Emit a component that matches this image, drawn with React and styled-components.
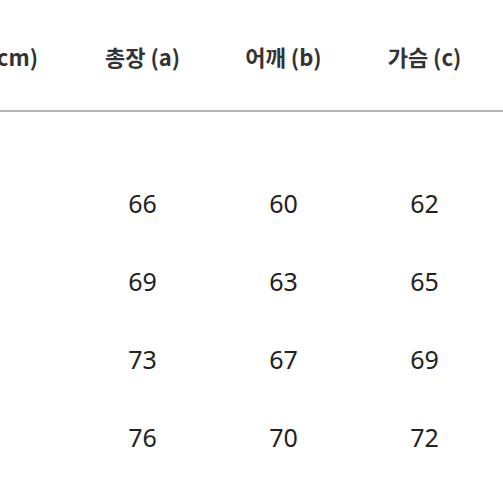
import React from "react";
import styled, { createGlobalStyle } from "styled-components";

const Global = createGlobalStyle`
  html, body { margin: 0; padding: 0; background: #fff; }
  body { width: 503px; height: 503px; overflow: hidden; font-family: "Noto Sans", "Noto Sans CJK KR", sans-serif; }
`;

const Table = styled.div`
  width: 503px;
`;

const Row = styled.div`
  display: grid;
  grid-template-columns: 72px repeat(3, 141px);
  height: ${(p) => p.$h}px;
  align-items: center;
`;

const HeadRow = styled(Row)`
  box-sizing: border-box;
  padding-top: 2px;
  border-bottom: 2px solid #b4b4b4;
`;

const Body = styled.div`
  padding-top: 52px;
`;

const HeadCell = styled.div`
  display: flex;
  justify-content: ${(p) => (p.$first ? "flex-end" : "center")};
  padding-right: ${(p) => (p.$first ? 34 : 0)}px;
  white-space: nowrap;
  font-family: "Noto Sans CJK KR", "Noto Sans", sans-serif;
  font-weight: 700;
  font-size: 22px;
  color: #333;
  letter-spacing: 0;
`;

const Cell = styled.div`
  text-align: center;
  font-family: "Noto Sans", "Noto Sans CJK KR", sans-serif;
  font-size: 25px;
  color: #222;
  line-height: 1;
`;

const heads = ["사이즈 (cm)", "총장 (a)", "어깨 (b)", "가슴 (c)"];
const rows = [
  [66, 60, 62],
  [69, 63, 65],
  [73, 67, 69],
  [76, 70, 72],
];

export default function App() {
  return (
    <>
      <Global />
      <Table>
        <HeadRow $h={112}>
          {heads.map((h, i) => (
            <HeadCell key={h} $first={i === 0}>{h}</HeadCell>
          ))}
        </HeadRow>
        <Body>
          {rows.map((r, i) => (
            <Row key={i} $h={78}>
              <Cell />
              {r.map((v, j) => (
                <Cell key={j}>{v}</Cell>
              ))}
            </Row>
          ))}
        </Body>
      </Table>
    </>
  );
}
